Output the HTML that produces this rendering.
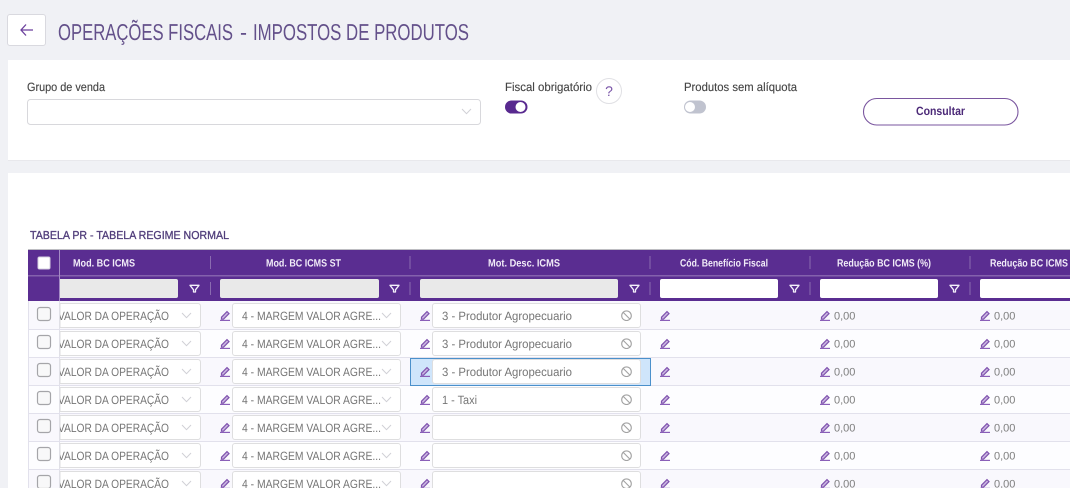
<!DOCTYPE html>
<html lang="pt-BR"><head><meta charset="utf-8"><title>Operações Fiscais - Impostos de Produtos</title>
<style>
html,body{margin:0;padding:0;width:1070px;height:488px;overflow:hidden;background:#f0f1f5}
svg.page{display:block;font-family:"Liberation Sans",sans-serif;filter:blur(.3px)}
.h{font-size:10.5px;font-weight:700;fill:#f1ecf8}
.v{font-size:12px;fill:#757575}
.n{font-size:11px;fill:#808080}
.l{font-size:12px;fill:#444;stroke:#444;stroke-width:.12}
.t{font-family:"Liberation Sans Narrow","Liberation Sans",sans-serif;font-size:23px;fill:#63508a}
</style></head><body>
<svg class="page" width="1070" height="488" viewBox="0 0 1070 488" xmlns="http://www.w3.org/2000/svg" text-rendering="geometricPrecision">
<defs>
<g id="p" fill="none"><path d="M1.500 7.200 7 1.600l2 2-5.500 5.600H1.500z" fill="#c9b4e0" stroke="#7f52ae" stroke-width="1.200"/><path d="M0 10.400h10" stroke="#8a5fb8" stroke-width="1.200"/></g>
<path id="c" d="M0 0l4.500 4.700 4.500-4.700" fill="none" stroke="#d0d0d5" stroke-width="1"/>
<g id="b" fill="none" stroke="#a2a2a2" stroke-width="1.100"><circle r="4.800"/><path d="M-3.300-3.300 3.300 3.300"/></g>
<path id="f" d="M-4.500-3.200H4.500L1 1.300V3.500H-1V1.300z" fill="none" stroke="#f4f0fa" stroke-width="1.300" stroke-linejoin="round"/>
</defs>

<rect width="1070" height="488" fill="#f0f1f5"/>
<!-- top -->
<rect x="7.500" y="14.500" width="38" height="31" rx="2.500" fill="#fff" stroke="#d9d9df"/>
<path d="M21 30h12M26 24.500 21 30l5 5.500" fill="none" stroke="#6a3f9c" stroke-width="1.300"/>
<text class="t" x="58" y="40" textLength="175" lengthAdjust="spacingAndGlyphs">OPERAÇÕES FISCAIS</text>
<text class="t" x="240" y="40" textLength="7" lengthAdjust="spacingAndGlyphs">-</text>
<text class="t" x="253" y="40" textLength="216" lengthAdjust="spacingAndGlyphs">IMPOSTOS DE PRODUTOS</text>

<rect x="8" y="60" width="1062" height="101" fill="#fff"/>
<rect x="8" y="160" width="1062" height="1" fill="#e8e8ec"/>
<text class="l" x="27" y="91" textLength="78" lengthAdjust="spacingAndGlyphs">Grupo de venda</text>
<rect x="27.500" y="99.500" width="453" height="25" rx="3" fill="#fff" stroke="#d8d8dc"/>
<use href="#c" x="462" y="109"/>
<text class="l" x="505" y="91" textLength="87" lengthAdjust="spacingAndGlyphs">Fiscal obrigatório</text>
<rect x="505" y="100.500" width="22.500" height="13" rx="6.500" fill="#58298f"/>
<circle cx="520.500" cy="107" r="5" fill="#fff"/>
<circle cx="609" cy="91" r="12.500" fill="#fff" stroke="#e0e0e4"/>
<text x="609" y="96" font-size="14" text-anchor="middle" fill="#7a55a8">?</text>
<text class="l" x="684" y="91" textLength="113" lengthAdjust="spacingAndGlyphs">Produtos sem alíquota</text>
<rect x="684" y="100.500" width="22" height="13" rx="6.500" fill="#c0c3cf"/>
<circle cx="690" cy="107" r="5" fill="#fff"/>
<rect x="863.500" y="98.500" width="154.500" height="26.500" rx="13.250" fill="#fff" stroke="#7a569f" stroke-width="1.100"/>
<text x="916" y="115" font-size="12" font-weight="700" fill="#4c2a78" textLength="49" lengthAdjust="spacingAndGlyphs">Consultar</text>

<rect x="8" y="173" width="1062" height="315" fill="#fff"/>
<text x="30" y="239" font-size="11.500" fill="#4f3c7a" stroke="#4f3c7a" stroke-width=".3" textLength="199" lengthAdjust="spacingAndGlyphs">TABELA PR - TABELA REGIME NORMAL</text>

<!-- table head -->
<rect x="28" y="250" width="1042" height="51" fill="#5a2d91"/>
<rect x="28" y="249" width="1042" height="1" fill="#bdbdc2"/>
<rect x="28" y="275" width="1042" height="1.500" fill="#8461ad"/>
<rect x="59" y="250" width="1" height="51" fill="#a58cc5"/>
<rect x="38" y="257" width="12" height="12" rx="1.500" fill="#fff" stroke="#d6d0e0"/>
<text class="h" x="73" y="266.500" textLength="62" lengthAdjust="spacingAndGlyphs">Mod. BC ICMS</text>
<text class="h" x="266" y="266.500" textLength="75" lengthAdjust="spacingAndGlyphs">Mod. BC ICMS ST</text>
<text class="h" x="488" y="266.500" textLength="72" lengthAdjust="spacingAndGlyphs">Mot. Desc. ICMS</text>
<text class="h" x="680" y="266.500" textLength="88" lengthAdjust="spacingAndGlyphs">Cód. Benefício Fiscal</text>
<text class="h" x="837" y="266.500" textLength="94" lengthAdjust="spacingAndGlyphs">Redução BC ICMS (%)</text>
<text class="h" x="990" y="266.500" textLength="78" lengthAdjust="spacingAndGlyphs">Redução BC ICMS</text>
<g fill="#8a6bb0">
<rect x="210" y="256" width="1" height="13"/><rect x="409.500" y="256" width="1" height="13"/><rect x="649.500" y="256" width="1" height="13"/><rect x="809.500" y="256" width="1" height="13"/><rect x="969.500" y="256" width="1" height="13"/>
<rect x="210" y="282" width="1" height="13"/><rect x="409.500" y="282" width="1" height="13"/><rect x="649.500" y="282" width="1" height="13"/><rect x="809.500" y="282" width="1" height="13"/><rect x="969.500" y="282" width="1" height="13"/>
</g>
<path d="M60 279h116a2 2 0 0 1 2 2v15a2 2 0 0 1-2 2H60z" fill="#e9e9e9"/>
<rect x="220" y="279" width="159" height="19" rx="2" fill="#e9e9e9"/>
<rect x="420" y="279" width="198" height="19" rx="2" fill="#e9e9e9"/>
<rect x="660" y="279" width="118" height="19" rx="2" fill="#fff"/>
<rect x="820" y="279" width="118" height="19" rx="2" fill="#fff"/>
<path d="M1070 279H982a2 2 0 0 0-2 2v15a2 2 0 0 0 2 2h88z" fill="#fff"/>
<use href="#f" x="194.500" y="288.500"/><use href="#f" x="394.500" y="288.500"/><use href="#f" x="634.500" y="288.500"/><use href="#f" x="794.500" y="288.500"/><use href="#f" x="954.500" y="288.500"/>

<!-- row backgrounds -->
<rect x="28" y="301" width="1042" height="28" fill="#f9f8fd"/>
<rect x="28" y="329" width="1042" height="28" fill="#fdfdff"/>
<rect x="28" y="357" width="1042" height="28" fill="#f9f8fd"/>
<rect x="28" y="385" width="1042" height="28" fill="#fdfdff"/>
<rect x="28" y="413" width="1042" height="28" fill="#f9f8fd"/>
<rect x="28" y="441" width="1042" height="28" fill="#fdfdff"/>
<rect x="28" y="469" width="1042" height="19" fill="#f9f8fd"/>
<g fill="#e2e1ec">
<rect x="28" y="329" width="1042" height="1"/><rect x="28" y="357" width="1042" height="1"/><rect x="28" y="385" width="1042" height="1"/><rect x="28" y="413" width="1042" height="1"/><rect x="28" y="441" width="1042" height="1"/><rect x="28" y="469" width="1042" height="1"/>
<rect x="28" y="301" width="1" height="187"/><rect x="59" y="301" width="1" height="187"/>
</g>
<rect x="410.500" y="358.500" width="240" height="27" fill="#cfe5fb" stroke="#4b90cb"/>

<!-- row 1 -->
<g transform="translate(0,301)">
<rect x="37.500" y="6.500" width="13" height="13" rx="2.500" fill="#f8f8f9" stroke="#a5a5a9" stroke-width="1.200"/>
<path d="M60 2.500h138a2.500 2.500 0 0 1 2.500 2.500v19a2.500 2.500 0 0 1-2.500 2.500H60z" fill="#fff" stroke="#dededf"/>
<svg x="60" y="0" width="130" height="28"><text class="v" x="-2" y="19" textLength="111" lengthAdjust="spacingAndGlyphs">VALOR DA OPERAÇÃO</text></svg>
<use href="#c" x="182" y="12"/><use href="#p" x="220" y="9"/>
<rect x="232.500" y="2.500" width="168" height="24" rx="2.500" fill="#fff" stroke="#dededf"/>
<text class="v" x="242" y="19" textLength="139" lengthAdjust="spacingAndGlyphs">4 - MARGEM VALOR AGRE...</text>
<use href="#c" x="382" y="12"/><use href="#p" x="420" y="9"/>
<rect x="432.500" y="2.500" width="208" height="24" rx="2.500" fill="#fff" stroke="#dededf"/>
<text class="v" x="442" y="19" textLength="130" lengthAdjust="spacingAndGlyphs">3 - Produtor Agropecuario</text>
<use href="#b" x="626.500" y="14.700"/><use href="#p" x="660" y="9"/><use href="#p" x="820" y="9"/>
<text class="n" x="834" y="18.500">0,00</text><use href="#p" x="980" y="9"/><text class="n" x="994" y="18.500">0,00</text>
</g>
<!-- row 2 -->
<g transform="translate(0,329)">
<rect x="37.500" y="6.500" width="13" height="13" rx="2.500" fill="#f8f8f9" stroke="#a5a5a9" stroke-width="1.200"/>
<path d="M60 2.500h138a2.500 2.500 0 0 1 2.500 2.500v19a2.500 2.500 0 0 1-2.500 2.500H60z" fill="#fff" stroke="#dededf"/>
<svg x="60" y="0" width="130" height="28"><text class="v" x="-2" y="19" textLength="111" lengthAdjust="spacingAndGlyphs">VALOR DA OPERAÇÃO</text></svg>
<use href="#c" x="182" y="12"/><use href="#p" x="220" y="9"/>
<rect x="232.500" y="2.500" width="168" height="24" rx="2.500" fill="#fff" stroke="#dededf"/>
<text class="v" x="242" y="19" textLength="139" lengthAdjust="spacingAndGlyphs">4 - MARGEM VALOR AGRE...</text>
<use href="#c" x="382" y="12"/><use href="#p" x="420" y="9"/>
<rect x="432.500" y="2.500" width="208" height="24" rx="2.500" fill="#fff" stroke="#dededf"/>
<text class="v" x="442" y="19" textLength="130" lengthAdjust="spacingAndGlyphs">3 - Produtor Agropecuario</text>
<use href="#b" x="626.500" y="14.700"/><use href="#p" x="660" y="9"/><use href="#p" x="820" y="9"/>
<text class="n" x="834" y="18.500">0,00</text><use href="#p" x="980" y="9"/><text class="n" x="994" y="18.500">0,00</text>
</g>
<!-- row 3 -->
<g transform="translate(0,357)">
<rect x="37.500" y="6.500" width="13" height="13" rx="2.500" fill="#f8f8f9" stroke="#a5a5a9" stroke-width="1.200"/>
<path d="M60 2.500h138a2.500 2.500 0 0 1 2.500 2.500v19a2.500 2.500 0 0 1-2.500 2.500H60z" fill="#fff" stroke="#dededf"/>
<svg x="60" y="0" width="130" height="28"><text class="v" x="-2" y="19" textLength="111" lengthAdjust="spacingAndGlyphs">VALOR DA OPERAÇÃO</text></svg>
<use href="#c" x="182" y="12"/><use href="#p" x="220" y="9"/>
<rect x="232.500" y="2.500" width="168" height="24" rx="2.500" fill="#fff" stroke="#dededf"/>
<text class="v" x="242" y="19" textLength="139" lengthAdjust="spacingAndGlyphs">4 - MARGEM VALOR AGRE...</text>
<use href="#c" x="382" y="12"/><use href="#p" x="420" y="9"/>
<rect x="432.500" y="2.500" width="208" height="24" rx="2.500" fill="#fff" stroke="#dededf"/>
<text class="v" x="442" y="19" textLength="130" lengthAdjust="spacingAndGlyphs">3 - Produtor Agropecuario</text>
<use href="#b" x="626.500" y="14.700"/><use href="#p" x="660" y="9"/><use href="#p" x="820" y="9"/>
<text class="n" x="834" y="18.500">0,00</text><use href="#p" x="980" y="9"/><text class="n" x="994" y="18.500">0,00</text>
</g>
<!-- row 4 -->
<g transform="translate(0,385)">
<rect x="37.500" y="6.500" width="13" height="13" rx="2.500" fill="#f8f8f9" stroke="#a5a5a9" stroke-width="1.200"/>
<path d="M60 2.500h138a2.500 2.500 0 0 1 2.500 2.500v19a2.500 2.500 0 0 1-2.500 2.500H60z" fill="#fff" stroke="#dededf"/>
<svg x="60" y="0" width="130" height="28"><text class="v" x="-2" y="19" textLength="111" lengthAdjust="spacingAndGlyphs">VALOR DA OPERAÇÃO</text></svg>
<use href="#c" x="182" y="12"/><use href="#p" x="220" y="9"/>
<rect x="232.500" y="2.500" width="168" height="24" rx="2.500" fill="#fff" stroke="#dededf"/>
<text class="v" x="242" y="19" textLength="139" lengthAdjust="spacingAndGlyphs">4 - MARGEM VALOR AGRE...</text>
<use href="#c" x="382" y="12"/><use href="#p" x="420" y="9"/>
<rect x="432.500" y="2.500" width="208" height="24" rx="2.500" fill="#fff" stroke="#dededf"/>
<text class="v" x="442" y="19" textLength="35" lengthAdjust="spacingAndGlyphs">1 - Taxi</text>
<use href="#b" x="626.500" y="14.700"/><use href="#p" x="660" y="9"/><use href="#p" x="820" y="9"/>
<text class="n" x="834" y="18.500">0,00</text><use href="#p" x="980" y="9"/><text class="n" x="994" y="18.500">0,00</text>
</g>
<!-- row 5 -->
<g transform="translate(0,413)">
<rect x="37.500" y="6.500" width="13" height="13" rx="2.500" fill="#f8f8f9" stroke="#a5a5a9" stroke-width="1.200"/>
<path d="M60 2.500h138a2.500 2.500 0 0 1 2.500 2.500v19a2.500 2.500 0 0 1-2.500 2.500H60z" fill="#fff" stroke="#dededf"/>
<svg x="60" y="0" width="130" height="28"><text class="v" x="-2" y="19" textLength="111" lengthAdjust="spacingAndGlyphs">VALOR DA OPERAÇÃO</text></svg>
<use href="#c" x="182" y="12"/><use href="#p" x="220" y="9"/>
<rect x="232.500" y="2.500" width="168" height="24" rx="2.500" fill="#fff" stroke="#dededf"/>
<text class="v" x="242" y="19" textLength="139" lengthAdjust="spacingAndGlyphs">4 - MARGEM VALOR AGRE...</text>
<use href="#c" x="382" y="12"/><use href="#p" x="420" y="9"/>
<rect x="432.500" y="2.500" width="208" height="24" rx="2.500" fill="#fff" stroke="#dededf"/>
<use href="#b" x="626.500" y="14.700"/><use href="#p" x="660" y="9"/><use href="#p" x="820" y="9"/>
<text class="n" x="834" y="18.500">0,00</text><use href="#p" x="980" y="9"/><text class="n" x="994" y="18.500">0,00</text>
</g>
<!-- row 6 -->
<g transform="translate(0,441)">
<rect x="37.500" y="6.500" width="13" height="13" rx="2.500" fill="#f8f8f9" stroke="#a5a5a9" stroke-width="1.200"/>
<path d="M60 2.500h138a2.500 2.500 0 0 1 2.500 2.500v19a2.500 2.500 0 0 1-2.500 2.500H60z" fill="#fff" stroke="#dededf"/>
<svg x="60" y="0" width="130" height="28"><text class="v" x="-2" y="19" textLength="111" lengthAdjust="spacingAndGlyphs">VALOR DA OPERAÇÃO</text></svg>
<use href="#c" x="182" y="12"/><use href="#p" x="220" y="9"/>
<rect x="232.500" y="2.500" width="168" height="24" rx="2.500" fill="#fff" stroke="#dededf"/>
<text class="v" x="242" y="19" textLength="139" lengthAdjust="spacingAndGlyphs">4 - MARGEM VALOR AGRE...</text>
<use href="#c" x="382" y="12"/><use href="#p" x="420" y="9"/>
<rect x="432.500" y="2.500" width="208" height="24" rx="2.500" fill="#fff" stroke="#dededf"/>
<use href="#b" x="626.500" y="14.700"/><use href="#p" x="660" y="9"/><use href="#p" x="820" y="9"/>
<text class="n" x="834" y="18.500">0,00</text><use href="#p" x="980" y="9"/><text class="n" x="994" y="18.500">0,00</text>
</g>
<!-- row 7 -->
<g transform="translate(0,469)">
<rect x="37.500" y="6.500" width="13" height="13" rx="2.500" fill="#f8f8f9" stroke="#a5a5a9" stroke-width="1.200"/>
<path d="M60 2.500h138a2.500 2.500 0 0 1 2.500 2.500v19a2.500 2.500 0 0 1-2.500 2.500H60z" fill="#fff" stroke="#dededf"/>
<svg x="60" y="0" width="130" height="28"><text class="v" x="-2" y="19" textLength="111" lengthAdjust="spacingAndGlyphs">VALOR DA OPERAÇÃO</text></svg>
<use href="#c" x="182" y="12"/><use href="#p" x="220" y="9"/>
<rect x="232.500" y="2.500" width="168" height="24" rx="2.500" fill="#fff" stroke="#dededf"/>
<text class="v" x="242" y="19" textLength="139" lengthAdjust="spacingAndGlyphs">4 - MARGEM VALOR AGRE...</text>
<use href="#c" x="382" y="12"/><use href="#p" x="420" y="9"/>
<rect x="432.500" y="2.500" width="208" height="24" rx="2.500" fill="#fff" stroke="#dededf"/>
<use href="#b" x="626.500" y="14.700"/><use href="#p" x="660" y="9"/><use href="#p" x="820" y="9"/>
<text class="n" x="834" y="18.500">0,00</text><use href="#p" x="980" y="9"/><text class="n" x="994" y="18.500">0,00</text>
</g>
</svg>
</body></html>
